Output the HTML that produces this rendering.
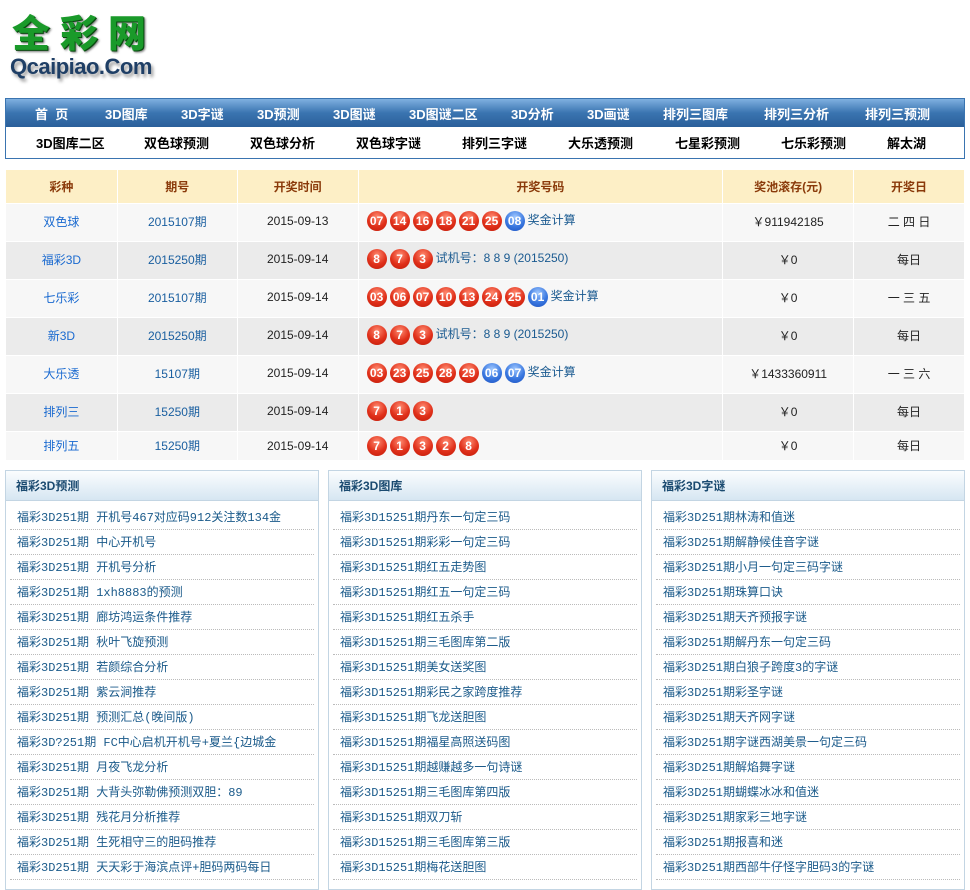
<!DOCTYPE html>
<html><head><meta charset="utf-8"><style>
*{margin:0;padding:0;box-sizing:border-box}
body{width:970px;height:882px;overflow:hidden;background:#fff;font-family:"Liberation Sans","Noto Sans CJK SC",sans-serif;font-size:12px;position:relative}
.logo1{position:absolute;left:12px;top:9px;font-size:38px;font-weight:900;color:#1a9a2a;letter-spacing:10px;text-shadow:1px 1px 0 #0a4a10,2px 2px 2px #777;font-family:"Noto Sans CJK SC",sans-serif;line-height:44px}
.logo2{position:absolute;left:10px;top:54px;font-size:22px;font-weight:bold;color:#1f3f66;text-shadow:2px 3px 3px #999;letter-spacing:-0.5px}
.nav{position:absolute;left:5px;top:98px;width:960px;height:61px;border:1px solid #3a74b0}
.nav1{height:28px;background:linear-gradient(#80b0e0,#3a74b0 50%,#2a5f9a)}
.n1 span{color:#fff;font-weight:bold;font-size:13px;position:absolute;top:6px}
.nav2 span{color:#000;font-weight:bold;font-size:13px;position:absolute;top:35px}
.tw{position:absolute;left:5px;top:169px;width:960px;height:291px;overflow:hidden}
table{border-collapse:collapse;width:960px}
td{border:1px solid #fff;text-align:center;height:38px;font-size:12px;color:#222;padding-bottom:3px}
tr.h td{height:34px;background:#fdefc6;color:#8a3a0a;font-weight:bold;padding-bottom:0}
tr.a td{background:#f7f7f7}tr.b td{background:#ebebeb}
tr.l td{height:30px;padding-bottom:2px}
td.n{color:#1a6ad0}td.q{color:#1a5fa0}
td.b{text-align:left;padding-left:8px;color:#1a5a90}
.ball{display:inline-block;width:20px;height:20px;border-radius:50%;background:radial-gradient(circle at 50% 30%,#ff8a70,#e0301a 55%,#c01a08);color:#fff;font-weight:bold;font-size:12px;line-height:20px;text-align:center;margin-right:3px;vertical-align:middle}
.bl{background:radial-gradient(circle at 50% 30%,#a0c8ff,#3a78e0 55%,#1a50c0)}
.p{position:absolute;top:470px;width:314px;height:420px;border:1px solid #c3d5e3}
.ph{height:30px;background:linear-gradient(#fbfdfe,#d6e6f2);border-bottom:1px solid #c3d5e3;font-weight:bold;color:#1a4a70;font-size:12px;line-height:30px;padding-left:10px}
.p ul{list-style:none;padding:4px 4px 0}
.p li{height:25px;line-height:26px;border-bottom:1px dotted #bbb;color:#1a5a8a;font-size:12px;padding-left:7px;white-space:nowrap;overflow:hidden;font-family:"Liberation Mono","Noto Sans CJK SC",monospace}
</style></head><body>
<div class="logo1">全彩网</div>
<div class="logo2">Qcaipiao.Com</div>
<div class="nav"><div class="nav1"></div></div>
<div style="position:absolute;left:5px;top:98px;width:960px;height:61px">
<div class="n1">
<span style="left:30px">首&nbsp;&nbsp;页</span>
<span style="left:100px">3D图库</span>
<span style="left:176px">3D字谜</span>
<span style="left:252px">3D预测</span>
<span style="left:328px">3D图谜</span>
<span style="left:404px">3D图谜二区</span>
<span style="left:506px">3D分析</span>
<span style="left:582px">3D画谜</span>
<span style="left:658px">排列三图库</span>
<span style="left:759px">排列三分析</span>
<span style="left:860px">排列三预测</span>
</div>
<div class="nav2">
<span style="left:31px">3D图库二区</span>
<span style="left:139px">双色球预测</span>
<span style="left:245px">双色球分析</span>
<span style="left:351px">双色球字谜</span>
<span style="left:457px">排列三字谜</span>
<span style="left:563px">大乐透预测</span>
<span style="left:670px">七星彩预测</span>
<span style="left:776px">七乐彩预测</span>
<span style="left:882px">解太湖</span>
</div></div>
<div class="tw"><table>
<colgroup><col style="width:112px"><col style="width:120px"><col style="width:121px"><col style="width:365px"><col style="width:131px"><col style="width:111px"></colgroup>
<tr class="h"><td>彩种</td><td>期号</td><td>开奖时间</td><td>开奖号码</td><td>奖池滚存(元)</td><td>开奖日</td></tr>
<tr class="a"><td class="n">双色球</td><td class="q">2015107期</td><td>2015-09-13</td><td class="b"><span class="ball">07</span><span class="ball">14</span><span class="ball">16</span><span class="ball">18</span><span class="ball">21</span><span class="ball">25</span><span class="ball bl">08</span>奖金计算</td><td>￥911942185</td><td>二 四 日</td></tr>
<tr class="b"><td class="n">福彩3D</td><td class="q">2015250期</td><td>2015-09-14</td><td class="b"><span class="ball">8</span><span class="ball">7</span><span class="ball">3</span>试机号：8 8 9 (2015250)</td><td>￥0</td><td>每日</td></tr>
<tr class="a"><td class="n">七乐彩</td><td class="q">2015107期</td><td>2015-09-14</td><td class="b"><span class="ball">03</span><span class="ball">06</span><span class="ball">07</span><span class="ball">10</span><span class="ball">13</span><span class="ball">24</span><span class="ball">25</span><span class="ball bl">01</span>奖金计算</td><td>￥0</td><td>一 三 五</td></tr>
<tr class="b"><td class="n">新3D</td><td class="q">2015250期</td><td>2015-09-14</td><td class="b"><span class="ball">8</span><span class="ball">7</span><span class="ball">3</span>试机号：8 8 9 (2015250)</td><td>￥0</td><td>每日</td></tr>
<tr class="a"><td class="n">大乐透</td><td class="q">15107期</td><td>2015-09-14</td><td class="b"><span class="ball">03</span><span class="ball">23</span><span class="ball">25</span><span class="ball">28</span><span class="ball">29</span><span class="ball bl">06</span><span class="ball bl">07</span>奖金计算</td><td>￥1433360911</td><td>一 三 六</td></tr>
<tr class="b"><td class="n">排列三</td><td class="q">15250期</td><td>2015-09-14</td><td class="b"><span class="ball">7</span><span class="ball">1</span><span class="ball">3</span></td><td>￥0</td><td>每日</td></tr>
<tr class="a l"><td class="n">排列五</td><td class="q">15250期</td><td>2015-09-14</td><td class="b"><span class="ball">7</span><span class="ball">1</span><span class="ball">3</span><span class="ball">2</span><span class="ball">8</span></td><td>￥0</td><td>每日</td></tr>
</table></div>
<div class="p" style="left:5px"><div class="ph">福彩3D预测</div><ul>
<li>福彩3D251期 开机号467对应码912关注数134金</li><li>福彩3D251期 中心开机号</li><li>福彩3D251期 开机号分析</li><li>福彩3D251期 1xh8883的预测</li><li>福彩3D251期 廊坊鸿运条件推荐</li><li>福彩3D251期 秋叶飞旋预测</li><li>福彩3D251期 若颜综合分析</li><li>福彩3D251期 紫云涧推荐</li><li>福彩3D251期 预测汇总(晚间版)</li><li>福彩3D?251期 FC中心启机开机号+夏兰{边城金</li><li>福彩3D251期 月夜飞龙分析</li><li>福彩3D251期 大背头弥勒佛预测双胆：89</li><li>福彩3D251期 残花月分析推荐</li><li>福彩3D251期 生死相守三的胆码推荐</li><li>福彩3D251期 天天彩于海滨点评+胆码两码每日</li></ul></div>
<div class="p" style="left:328px"><div class="ph">福彩3D图库</div><ul>
<li>福彩3D15251期丹东一句定三码</li><li>福彩3D15251期彩彩一句定三码</li><li>福彩3D15251期红五走势图</li><li>福彩3D15251期红五一句定三码</li><li>福彩3D15251期红五杀手</li><li>福彩3D15251期三毛图库第二版</li><li>福彩3D15251期美女送奖图</li><li>福彩3D15251期彩民之家跨度推荐</li><li>福彩3D15251期飞龙送胆图</li><li>福彩3D15251期福星高照送码图</li><li>福彩3D15251期越赚越多一句诗谜</li><li>福彩3D15251期三毛图库第四版</li><li>福彩3D15251期双刀斩</li><li>福彩3D15251期三毛图库第三版</li><li>福彩3D15251期梅花送胆图</li></ul></div>
<div class="p" style="left:651px"><div class="ph">福彩3D字谜</div><ul>
<li>福彩3D251期林涛和值迷</li><li>福彩3D251期解静候佳音字谜</li><li>福彩3D251期小月一句定三码字谜</li><li>福彩3D251期珠算口诀</li><li>福彩3D251期天齐预报字谜</li><li>福彩3D251期解丹东一句定三码</li><li>福彩3D251期白狼子跨度3的字谜</li><li>福彩3D251期彩圣字谜</li><li>福彩3D251期天齐网字谜</li><li>福彩3D251期字谜西湖美景一句定三码</li><li>福彩3D251期解焰舞字谜</li><li>福彩3D251期蝴蝶冰冰和值迷</li><li>福彩3D251期家彩三地字谜</li><li>福彩3D251期报喜和迷</li><li>福彩3D251期西部牛仔怪字胆码3的字谜</li></ul></div>
</body></html>
